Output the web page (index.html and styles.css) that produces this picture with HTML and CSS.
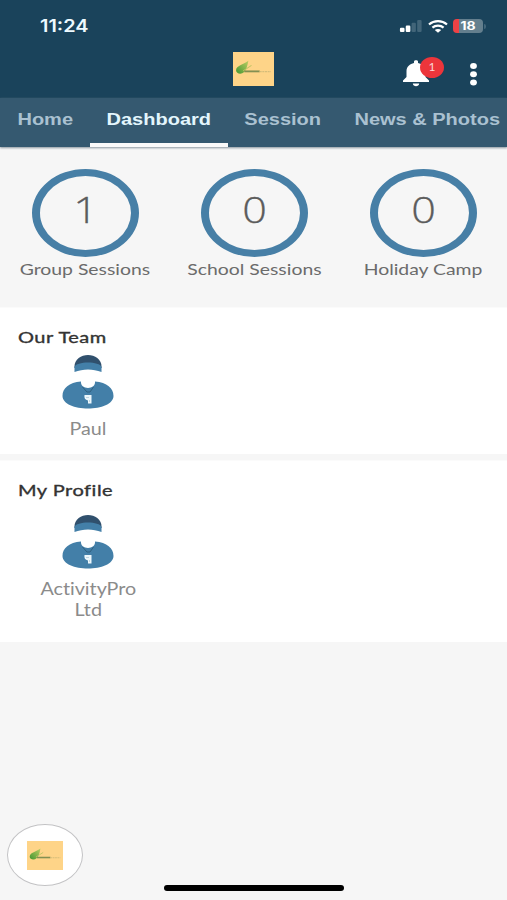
FILE: index.html
```html
<!DOCTYPE html>
<html lang="en">
<head>
<meta charset="utf-8">
<title>Dashboard</title>
<link rel="stylesheet" href="styles.css">
</head>
<body>
<svg class="defs" aria-hidden="true">
  <defs>
    <linearGradient id="leaf" x1="0" y1="1" x2="1" y2="0"><stop offset="0" stop-color="#439631"/><stop offset="1" stop-color="#bdce62"/></linearGradient>
    <symbol id="logo" viewBox="0 0 40 33" preserveAspectRatio="none">
      <rect width="40" height="33" fill="#fed488"/>
      <path d="M3 18C3 13 9 13 15 8.5C14 13 13 21 7 21C5 21 3 20 3 18Z" fill="url(#leaf)"/>
      <path d="M10 18.3L18 13" stroke="#c0c463" stroke-width="1"/>
      <path d="M11 18.8H26" stroke="#839052" stroke-width="1.8"/>
      <path d="M26 19H37" stroke="#d5bd7a" stroke-width="1.2" stroke-dasharray="2 .6"/>
    </symbol>
    <symbol id="coach" viewBox="0 0 52 55">
      <path d="M12.5 14C11-3.5 41-3.5 39.5 14Z" fill="#30506d"/>
      <path d="M12.5 18V13C14 7 38 7 39.5 13V18C31 14.5 21 14.5 12.5 18Z" fill="#437fa8"/>
      <path d="M19 27.5C18 36 34 36 33 27.5C45 28.5 51.5 34 51.5 42C51.5 50 39 54.5 26 54.5S.5 50 .5 42C.5 34 7 28.5 19 27.5Z" fill="#437fa8"/>
      <path d="M20.5 33L25 38H28L31.5 33" fill="none" stroke="#30607f" stroke-width="1"/>
      <path d="M22.5 41H29.5V49.5H26V46.5C23 46 22 44 22.5 41Z" fill="#edf7fb"/>
      <path d="M24 43.5H27M27.5 46V48" stroke="#9fc0d3" stroke-width=".6"/>
    </symbol>
  </defs>
</svg>
<header class="header">
  <div class="status">
    <span class="time">11:24</span>
    <div class="indicators">
      <svg class="signal" viewBox="0 0 24 13"><rect y="8.5" width="5" height="4.5" rx="1.2" fill="#fff"/><rect x="6.3" y="6" width="5" height="7" rx="1.2" fill="#fff"/><rect x="12.6" y="3" width="4.7" height="10" rx="1.2" fill="#426579"/><rect x="18.7" width="4.8" height="13" rx="1.2" fill="#426579"/></svg>
      <svg class="wifi" viewBox="0 0 20 13"><g fill="none" stroke="#fff" stroke-width="2.2"><path d="M1 4.5C6 .1 14 .1 19 4.5"/><path d="M4.4 7.7C7.5 5 12.5 5 15.6 7.7"/></g><path d="M6.8 9.9C8.5 8.6 11.5 8.6 13.2 9.9L10 12.8Z" fill="#fff"/></svg>
      <div class="battery"><span>18</span></div><i class="battery-tip"></i>
    </div>
  </div>
  <div class="toolbar">
    <svg class="logo"><use href="#logo"/></svg>
    <div class="bell">
      <svg viewBox="0 0 27 27"><path d="M0 22V20.5L3.5 17V11C3.5 6.5 7 4 11 3V1.5C11-.3 15-.3 15 1.5V3C19 4 22.5 6.5 22.5 11V17L26 20.5V22Z" fill="#fff"/><path d="M9.8 23.5H16.2C16 27 10 27 9.8 23.5Z" fill="#fff"/></svg>
      <span class="badge">1</span>
    </div>
    <svg class="more" viewBox="0 0 7 23"><g fill="#fff"><ellipse cx="3.5" cy="3" rx="3.4" ry="3"/><ellipse cx="3.5" cy="11.3" rx="3.4" ry="3"/><ellipse cx="3.5" cy="19.5" rx="3.4" ry="3"/></g></svg>
  </div>
</header>
<nav class="tabs">
  <a class="tab home"><span>Home</span></a>
  <a class="tab dashboard active"><span>Dashboard</span></a>
  <a class="tab session"><span>Session</span></a>
  <a class="tab news"><span>News &amp; Photos</span></a>
</nav>
<main>
  <section class="stats">
    <div class="stat"><div class="ring"><span>1</span></div><span class="label">Group Sessions</span></div>
    <div class="stat"><div class="ring"><span>0</span></div><span class="label">School Sessions</span></div>
    <div class="stat"><div class="ring"><span>0</span></div><span class="label">Holiday Camp</span></div>
  </section>
  <section class="panel team">
    <h2><span>Our Team</span></h2>
    <div class="person"><svg class="avatar"><use href="#coach"/></svg><span class="name">Paul</span></div>
  </section>
  <section class="panel profile">
    <h2><span>My Profile</span></h2>
    <div class="person"><svg class="avatar"><use href="#coach"/></svg><span class="name">ActivityPro<br>Ltd</span></div>
  </section>
</main>
<div class="fab"><svg><use href="#logo"/></svg></div>
<div class="home-bar"></div>
</body>
</html>
```
FILE: styles.css
```css
* { box-sizing: border-box; }
body { margin: 0; width: 507px; height: 900px; overflow: hidden; position: relative; background: #f6f6f6; font-family: Lato, "Open Sans", sans-serif; font-variant-ligatures: none; }
svg { display: block; }
.defs { position: absolute; width: 0; height: 0; }
.header { height: 98px; background: #1a435b; }
.status { height: 50px; padding: 2px 21px 0 40px; display: flex; align-items: center; justify-content: space-between; }
.time { font: 600 17px/20px Inter, sans-serif; color: #eefaff; transform: scaleX(1.17); transform-origin: left; }
.indicators { display: flex; align-items: center; }
.signal { width: 24px; height: 12px; margin-right: 5px; }
.wifi { width: 20px; height: 13px; margin-right: 5px; }
.battery { width: 30px; height: 14px; border-radius: 4px; background: linear-gradient(90deg, #ee4245 6px, #647f8e 6px); color: #fff; font: bold 11.5px/14px Inter, sans-serif; text-align: center; }
.battery span { display: block; transform: scaleX(1.22); }
.battery-tip { width: 2px; height: 5px; margin-left: 1px; background: #426579; border-radius: 0 2px 2px 0; }
.toolbar { display: flex; height: 48px; padding-left: 233px; }
.logo { width: 41px; height: 34px; margin-top: 2px; }
.bell { position: relative; margin: 10px 0 0 129px; width: 27px; height: 27px; }
.bell svg { width: 27px; height: 27px; }
.badge { position: absolute; left: 17px; top: -3px; width: 24px; height: 21px; border-radius: 50%; background: #ec353b; color: #fbd5d6; font: 12px/20px Lato, sans-serif; text-align: center; }
.more { width: 7px; height: 23px; margin: 13px 0 0 40px; }
.tabs { display: flex; height: 49px; background: #355970; box-shadow: 0 1px 2px #8a969e; position: relative; }
.tab { flex: none; height: 49px; color: #aac1d1; font: bold 16px/44px "Liberation Sans", sans-serif; display: flex; justify-content: center; white-space: nowrap; }
.tab span { transform: scaleX(1.25); }
.home { width: 90px; }
.dashboard { width: 138px; }
.session { width: 109px; }
.news { width: 170px; padding-left: 11px; }
.active { color: #e3f6fd; border-bottom: 4px solid #fafafa; }
.stats { height: 160px; padding: 22px 0 0 1px; display: flex; gap: 62px; justify-content: center; background: #f6f6f6; }
.stat { width: 107px; display: flex; flex-direction: column; align-items: center; white-space: nowrap; }
.ring { width: 107px; height: 88px; border: solid #477fa6; border-width: 7px 8px; border-radius: 50%; text-align: center; color: #5c5c5c; font: 300 36px/67px "Open Sans", sans-serif; }
.ring span { display: block; transform: scaleX(1.2); -webkit-text-stroke: .3px #5c5c5c; }
.label { font-size: 16px; line-height: 20px; margin-top: 2px; color: #6b6b6b; transform: scaleX(1.21); }
.panel { background: #fff; padding: 19px 18px 0; border-top: 1px solid #fbfbfb; }
.team { height: 147px; }
.profile { height: 182px; margin-top: 6px; }
h2 { margin: 0; font-size: 16px; line-height: 20px; font-weight: 400; color: #333; }
h2 span { display: inline-block; transform: scaleX(1.25); transform-origin: left; letter-spacing: .4px; -webkit-text-stroke: .35px #333; }
.person { width: 140px; margin-top: 7px; display: flex; flex-direction: column; align-items: center; }
.profile .person { margin-top: 14px; }
.avatar { width: 52px; height: 55px; }
.name { margin-top: 9px; color: #8b8b8b; font-size: 17px; line-height: 21px; text-align: center; transform: scaleX(1.16); }
.fab { position: absolute; left: 7px; top: 824px; width: 76px; height: 62px; border: 1.5px solid #c3c3c5; border-radius: 50%; background: #fff; display: flex; align-items: center; justify-content: center; }
.fab svg { width: 36px; height: 29px; }
.home-bar { position: absolute; left: 164px; top: 885px; width: 180px; height: 6px; border-radius: 3px; background: #000; }
```
